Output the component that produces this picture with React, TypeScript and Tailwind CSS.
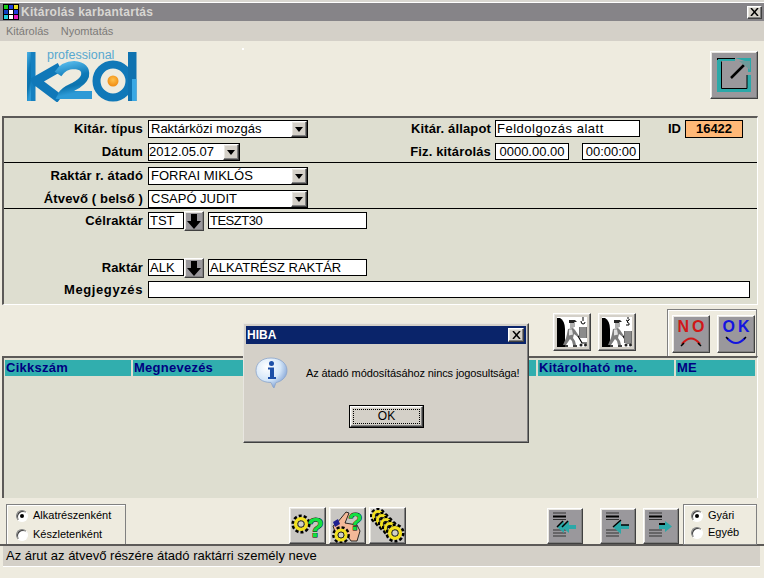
import React from "react";

const sans = "font-['Liberation_Sans',Arial,sans-serif]";
const raised = "border border-t-white border-l-white border-r-[#404040] border-b-[#404040] shadow-[inset_-1px_-1px_0_#808080,inset_1px_1px_0_#e8e6e0]";

function Label({ w, children }: { w: string; children: React.ReactNode }) {
  return <div className={`${w} shrink-0 pr-[5px] text-right text-[13px] font-bold leading-[17px] tracking-[0.15px] text-black`}>{children}</div>;
}

function Box({ w, children, center }: { w: string; children?: React.ReactNode; center?: boolean }) {
  return (
    <div className={`${w} h-[17px] shrink-0 border border-black bg-white px-[1px] text-[13px] leading-[15px] text-black whitespace-nowrap overflow-hidden ${center ? "text-center" : ""}`}>
      {children}
    </div>
  );
}

function Combo({ w, children }: { w: string; children: React.ReactNode }) {
  return (
    <div className={`${w} h-[18px] shrink-0 flex border border-black bg-white text-[13px] leading-[15px] text-black`}>
      <div className="flex-1 pl-[2px] whitespace-nowrap overflow-hidden">{children}</div>
      <div className={`w-[16px] h-full bg-[#d4d0c8] flex items-center justify-center ${raised}`}>
        <svg width="8" height="5" viewBox="0 0 8 5"><path d="M0 0h8L4 5z" fill="#000" /></svg>
      </div>
    </div>
  );
}

function DownBtn() {
  return (
    <div className={`w-[20px] h-[20px] -mt-[1px] shrink-0 bg-[#9a989c] flex items-center justify-center ${raised}`}>
      <svg width="14" height="15" viewBox="0 0 14 15"><path d="M4 0h6v7h4l-7 8-7-8h4z" fill="#000" /></svg>
    </div>
  );
}

function Divider() {
  return <div className="h-[1px] bg-black" />;
}

function ManIcon({ loaded }: { loaded?: boolean }) {
  return (
    <svg width="30" height="30" viewBox="0 0 30 30">
      <rect width="30" height="30" fill="#fff" />
      <path d="M0 30V1h3q5 3 5 11v18z" fill="#000" />
      <path d="M13 5h5v5h-1l-1 1h-3z" fill="#b0b0b0" />
      <path d="M12 3h6l2 2-3 0v1h-5z" fill="#222" />
      <path d="M11 12l5-1 2 2 4 6-1 1-4-3-1 4 2 3 1 4h-3l-1-4-2-2-4 6H6l3-7 1-4z" fill="#7c7c7c" />
      <path d="M12 12.500h3l1 5-4 1z" fill="#e0e0e0" />
      <path d="M7 29h4M16 29h4" stroke="#000" strokeWidth="1.500" />
      <path d="M21 19l4 7h5" stroke="#000" strokeWidth="1.200" fill="none" />
      <circle cx="24" cy="28" r="1.500" fill="#222" />
      <circle cx="28.500" cy="28" r="1.500" fill="#222" />
      {loaded ? (
        <>
          <path d="M26 0v4m-2 0q0 3 2 3t2-2" stroke="#000" strokeWidth="1" fill="none" />
          <rect x="22" y="10" width="8" height="11" fill="#6e6e6e" />
          <path d="M24 10v11M26 10v11M28 10v11" stroke="#a8a8a8" strokeWidth="1" />
        </>
      ) : (
        <>
          <path d="M26 0v2m-2 1q2 2 3 0t-2 2q3 1 2 3h-3" stroke="#000" strokeWidth="1" fill="none" />
          <rect x="22" y="14" width="8" height="12" fill="#6e6e6e" />
          <path d="M24 14v12M26 14v12M28 14v12" stroke="#a8a8a8" strokeWidth="1" />
        </>
      )}
    </svg>
  );
}

function Gear({ x, y, r }: { x: number; y: number; r: number }) {
  return (
    <g>
      <circle cx={x} cy={y} r={r} fill="none" stroke="#000" strokeWidth={r * 0.95} strokeDasharray="2.4 1.6" />
      <circle cx={x} cy={y} r={r * 0.82} fill="none" stroke="#f2e020" strokeWidth={r * 0.55} />
      <circle cx={x} cy={y} r={r * 0.5} fill="#cfcfc8" stroke="#000" strokeWidth="0.8" />
    </g>
  );
}

function Question({ x, y, size }: { x: number; y: number; size: number }) {
  return (
    <text x={x} y={y} fontSize={size} fontWeight="900" fill="#10e040" stroke="#000" strokeWidth="0.9" paintOrder="stroke" fontFamily="'Liberation Sans',Arial,sans-serif">?</text>
  );
}

function ListArrow({ dir, dbl }: { dir: "l" | "r"; dbl?: boolean }) {
  return (
    <svg width="30" height="30" viewBox="0 0 30 30">
      <path d="M5 4h13M5 10.500h13" stroke="#333" strokeWidth="1" />
      <path d="M5 7.500h13" stroke="#000" strokeWidth="2" />
      <path d="M5 21h13M5 24h13M5 27h13" stroke="#333" strokeWidth="1" />
      {dir === "r" ? (
        <>
          <path d="M15 15h6v-3l7 5.500-7 5.500v-3h-6z" fill="#2ba8a8" />
          <path d="M15 15h6" stroke="#000" strokeWidth="2" />
        </>
      ) : dbl ? (
        <>
          <path d="M28 16h-9l-1 4h10z" fill="#2ba8a8" />
          <path d="M21 12l-7 6 7 6z" fill="#2ba8a8" />
          <path d="M16 12l-7 6 7 6z" fill="#2ba8a8" />
          <path d="M20 12l-6 6M15 12l-6 6" stroke="#000" strokeWidth="1.500" />
        </>
      ) : (
        <>
          <path d="M28 16h-9v4h9z" fill="#2ba8a8" />
          <path d="M20 11l-8 7 8 7z" fill="#2ba8a8" />
          <path d="M20 11l-8 7M20 16h8" stroke="#000" strokeWidth="1.500" />
        </>
      )}
    </svg>
  );
}

function Radio({ on, h, children }: { on?: boolean; h: string; children: React.ReactNode }) {
  return (
    <div className={`flex items-center ${h} text-[11px] text-black`}>
      <div className="w-[12px] h-[12px] shrink-0 rounded-full bg-white border border-t-[#808080] border-l-[#808080] border-r-white border-b-white flex items-center justify-center shadow-[inset_1px_1px_0_#404040]">
        {on && <div className="w-[4px] h-[4px] rounded-full bg-black" />}
      </div>
      <span className="ml-[5px]">{children}</span>
    </div>
  );
}

function Logo() {
  return (
    <svg width="112" height="53" viewBox="0 0 112 53">
      <defs>
        <linearGradient id="lg" x1="0" y1="0" x2="0.25" y2="1">
          <stop offset="0" stopColor="#4fb4e6" />
          <stop offset="0.45" stopColor="#0f7ab8" />
          <stop offset="0.75" stopColor="#0d74ae" />
          <stop offset="1" stopColor="#2d9ad6" />
        </linearGradient>
        <radialGradient id="dot" cx="0.5" cy="0.4" r="0.6">
          <stop offset="0" stopColor="#ffc04a" />
          <stop offset="1" stopColor="#f08a10" />
        </radialGradient>
      </defs>
      <rect x="1" y="3" width="8.500" height="49" fill="#1580c0" />
      <rect x="1" y="3" width="4" height="49" fill="url(#lg)" />
      <path d="M6 34L34 18M10 32L34 50" stroke="#1078b8" strokeWidth="9" fill="none" />
      <path d="M32 25q6-9 16-9 13 1 11 11-2 6-12 11-9 4-11 8h30" stroke="url(#lg)" strokeWidth="8" fill="none" />
      <circle cx="87" cy="32" r="16.500" fill="#eeebdf" stroke="#1078b8" strokeWidth="8" />
      <rect x="102" y="3" width="8.500" height="49" fill="#0f72b0" />
      <rect x="106" y="30" width="4.500" height="22" fill="#3aa8e4" />
      <circle cx="87" cy="32" r="5.500" fill="url(#dot)" />
      <text x="21" y="10" fontSize="12.500" fill="#58a8d0" fontFamily="'Liberation Sans',Arial,sans-serif">professional</text>
    </svg>
  );
}

function InfoIcon() {
  return (
    <svg width="33" height="32" viewBox="0 0 33 32" className="shrink-0">
      <defs>
        <radialGradient id="bub" cx="0.35" cy="0.3" r="0.8">
          <stop offset="0" stopColor="#ffffff" />
          <stop offset="0.55" stopColor="#d4e6f8" />
          <stop offset="1" stopColor="#6c90cc" />
        </radialGradient>
      </defs>
      <path d="M16 1c9 0 16 5 16 12.500S25 25 21 25.500l-2 5.500-1-1-2-4.500C7 25.500 1 21 1 13.500S7 1 16 1z" fill="url(#bub)" stroke="#8aa4cc" strokeWidth="0.8" />
      <circle cx="16.500" cy="6.500" r="2.500" fill="#1c4fa8" />
      <path d="M13 10.500h6v9.500h2v2h-8v-2h2v-7.500h-2z" fill="#1c4fa8" />
    </svg>
  );
}

export default function App() {
  return (
    <div className={`relative w-[764px] h-[578px] overflow-hidden bg-[#eeebdf] ${sans}`}>
      {/* title bar */}
      <div className="h-[3px] border-t-2 border-[#d8d6d0] bg-white" />
      <div className="flex items-center h-[18px] bg-[#868488] pl-[3px] pr-[2px]">
        <svg width="16" height="16" viewBox="0 0 16 16" className="shrink-0">
          <rect width="16" height="16" fill="#000" />
          <rect x="1" y="1" width="4" height="4" fill="#18d018" />
          <rect x="6" y="1" width="4" height="4" fill="#2040e0" />
          <rect x="11" y="1" width="4" height="4" fill="#e8e020" />
          <rect x="1" y="6" width="4" height="4" fill="#1040c0" />
          <rect x="6" y="6" width="4" height="4" fill="#fff" />
          <rect x="11" y="6" width="4" height="4" fill="#2040e0" />
          <rect x="1" y="11" width="4" height="4" fill="#20d0e0" />
          <rect x="6" y="11" width="4" height="4" fill="#fff" />
          <rect x="11" y="11" width="4" height="4" fill="#e820c0" />
        </svg>
        <div className="ml-[2px] text-[12px] font-bold tracking-[0.25px] text-[#d8d6d2]">Kitárolás karbantartás</div>
        <div className={`ml-auto w-[15px] h-[13px] bg-[#d4d0c8] flex items-center justify-center ${raised}`}>
          <svg width="9" height="8" viewBox="0 0 9 8"><path d="M1 0l7 8M8 0L1 8" stroke="#000" strokeWidth="1.500" fill="none" /></svg>
        </div>
      </div>
      {/* menu */}
      <div className="flex items-center h-[20px] bg-[#d4d0c8] pl-[6px] gap-[12px] text-[11px] text-[#7c7a78]">
        <span>Kitárolás</span>
        <span>Nyomtatás</span>
      </div>
      {/* logo strip */}
      <div className="flex h-[75px] pl-[26px] pr-[6px] pt-[8px]">
        <Logo />
        <div className={`ml-auto w-[48px] h-[48px] mt-[2px] bg-[#9a989c] flex items-center justify-center ${raised}`}>
          <svg width="34" height="34" viewBox="0 0 34 34">
            <path d="M0 0h18v3H4v27h26V17h4v17H0z" fill="#2ba8a8" />
            <path d="M18 0h16v14h-3V8l-2-1-1-4z" fill="#2ba8a8" />
            <path d="M0 .5h18M.5 0v2M4.500 3.500V30.500H30V17" stroke="#000" strokeWidth="1" fill="none" />
            <path d="M14 20L27 7" stroke="#000" strokeWidth="2.500" />
            <path d="M22 3h11v9z" fill="#6f9a9a" />
          </svg>
        </div>
      </div>
      {/* form panel */}
      <div className="ml-[2px] w-[756px] h-[189px] border-t-2 border-l-2 border-r border-b border-t-[#5c5a58] border-l-[#5c5a58] border-r-white border-b-white bg-[#deded0]">
        <div className="h-[44px] pt-[2px] flex flex-col gap-[6px]">
          <div className="flex h-[17px]">
            <Label w="w-[144px]">Kitár. típus</Label>
            <Combo w="w-[160px]">Raktárközi mozgás</Combo>
            <Label w="w-[187px] !pr-[4px]">Kitár. állapot</Label>
            <Box w="w-[145px]"><span className="tracking-[0.5px]">Feldolgozás alatt</span></Box>
            <div className="w-[45px] pr-[4px] text-right text-[13px] font-bold leading-[17px]">ID</div>
            <div className="w-[58px] h-[18px] border border-black bg-[#ffb877] text-center text-[13px] font-bold leading-[16px]">16422</div>
          </div>
          <div className="flex h-[17px]">
            <Label w="w-[144px]">Dátum</Label>
            <div className="w-[92px] h-[18px] shrink-0 flex border border-black bg-white text-[13px] leading-[15px]">
              <div className="flex-1 whitespace-nowrap">2012.05.07</div>
              <div className={`w-[16px] h-full bg-[#d4d0c8] flex items-center justify-center ${raised}`}>
                <svg width="8" height="5" viewBox="0 0 8 5"><path d="M0 0h8L4 5z" fill="#000" /></svg>
              </div>
            </div>
            <Label w="w-[255px] !pr-[4px]">Fiz. kitárolás</Label>
            <Box w="w-[74px]" center>0000.00.00</Box>
            <div className="w-[13px]" />
            <Box w="w-[58px]" center>00:00:00</Box>
          </div>
        </div>
        <Divider />
        <div className="h-[45px] pt-[4px] flex flex-col gap-[5px]">
          <div className="flex h-[18px]">
            <Label w="w-[144px]">Raktár r. átadó</Label>
            <Combo w="w-[160px]">FORRAI MIKLÓS</Combo>
          </div>
          <div className="flex h-[18px]">
            <Label w="w-[144px]">Átvevő ( belső )</Label>
            <Combo w="w-[160px]">CSAPÓ JUDIT</Combo>
          </div>
        </div>
        <Divider />
        <div className="pt-[3px]">
          <div className="flex h-[18px]">
            <Label w="w-[144px]">Célraktár</Label>
            <Box w="w-[36px]">TST</Box>
            <DownBtn />
            <div className="w-[4px]" />
            <Box w="w-[159px]"><span className="tracking-[-0.5px]">TESZT30</span></Box>
          </div>
          <div className="flex h-[18px] mt-[29px]">
            <Label w="w-[144px]">Raktár</Label>
            <Box w="w-[36px]">ALK</Box>
            <DownBtn />
            <div className="w-[4px]" />
            <Box w="w-[159px]">ALKATRÉSZ RAKTÁR</Box>
          </div>
          <div className="flex h-[18px] mt-[4px]">
            <Label w="w-[144px]"><span className="tracking-[0.6px]">Megjegyzés</span></Label>
            <Box w="w-[602px]" />
          </div>
        </div>
      </div>
      {/* toolbar */}
      <div className="flex items-start justify-end h-[51px] pr-[7px]">
        <div className={`mt-[8px] w-[38px] h-[38px] p-[3px] bg-[#d4d0c8] ${raised}`}><ManIcon loaded /></div>
        <div className={`mt-[8px] ml-[7px] w-[38px] h-[38px] p-[3px] bg-[#d4d0c8] ${raised}`}><ManIcon /></div>
        <div className="ml-[31px] mt-[4px] w-[90px] h-[47px] flex gap-[7px] pl-[4px] pt-[5px] border-t border-l border-r border-t-[#808080] border-l-[#808080] border-r-[#808080] bg-[#eeebdf] shadow-[inset_1px_1px_0_#fff]">
          <div className={`w-[38px] h-[38px] bg-[#9a989c] flex flex-col items-center pt-[3px] ${raised}`}>
            <div className="text-[16px] font-bold leading-[16px] tracking-[3px] pl-[3px] text-[#d01818]">NO</div>
            <svg width="22" height="11" viewBox="0 0 22 11" className="mt-[1px]"><path d="M2 8Q11-3 20 8" stroke="#d01818" strokeWidth="2" fill="none" /><path d="M1 10l3-3M21 10l-3-3" stroke="#000" strokeWidth="1.500" /></svg>
          </div>
          <div className={`w-[38px] h-[38px] bg-[#9a989c] flex flex-col items-center pt-[3px] ${raised}`}>
            <div className="text-[16px] font-bold leading-[16px] tracking-[3px] pl-[3px] text-[#1414e0]">OK</div>
            <svg width="22" height="11" viewBox="0 0 22 11" className="mt-[1px]"><path d="M2 2Q11 12 20 2" stroke="#1414e0" strokeWidth="2" fill="none" /><path d="M1 1l2 2M21 1l-2 2" stroke="#000" strokeWidth="1.500" /></svg>
          </div>
        </div>
      </div>
      {/* table panel */}
      <div className="ml-[2px] w-[756px] h-[142px] border-t-2 border-l-2 border-r border-t-[#5c5a58] border-l-[#5c5a58] border-r-white bg-[#deded0]">
        <div className="flex gap-[2px] h-[16px] mt-[2px] ml-[1px] text-[13px] font-bold leading-[16px] tracking-[0.25px] text-[#000080]">
          <div className="w-[126px] bg-[#31aeae] pl-[1px]">Cikkszám</div>
          <div className="w-[403px] bg-[#31aeae] pl-[1px]">Megnevezés</div>
          <div className="w-[136px] bg-[#31aeae] pl-[1px]">Kitárolható me.</div>
          <div className="w-[79px] bg-[#31aeae] pl-[1px]">ME</div>
        </div>
      </div>
      {/* bottom buttons */}
      <div className="flex h-[48px] pl-[6px] border-b-2 border-[#5c5a58]">
        <div className="mt-[6px] w-[120px] h-[40px] border-t border-l border-r border-[#808080] bg-[#eeebdf] pl-[9px] pt-[1px] shadow-[inset_1px_1px_0_#fff]">
          <Radio on h="h-[19px]">Alkatrészenként</Radio>
          <Radio h="h-[19px]">Készletenként</Radio>
        </div>
        <div className="flex items-start gap-[3px] ml-[163px] mt-[9px]">
          <div className={`w-[37px] h-[37px] bg-[#c8c6c2] ${raised}`}>
            <svg width="35" height="35" viewBox="0 0 35 35"><Gear x={11} y={16} r={6.500} /><Question x={17} y={29} size={28} /></svg>
          </div>
          <div className={`w-[37px] h-[37px] bg-[#c8c6c2] ${raised}`}>
            <svg width="35" height="35" viewBox="0 0 35 35">
              <path d="M3 18l4-3L16 4l3 1-4 10 12 2 3 6-3 10h-6l-6-9-9 3z" fill="#f4b898" stroke="#000" strokeWidth="0.8" />
              <path d="M3 14l5-3 2 5-5 3z" fill="#202090" />
              <Gear x={11} y={27} r={6} />
              <Question x={18} y={22} size={24} />
            </svg>
          </div>
          <div className={`w-[37px] h-[37px] bg-[#c8c6c2] ${raised}`}>
            <svg width="35" height="35" viewBox="0 0 35 35">
              <Gear x={8} y={8} r={5.500} /><Gear x={12} y={12} r={5.500} /><Gear x={16} y={16} r={5.500} /><Gear x={20} y={20} r={5.500} /><Gear x={25} y={25} r={6.500} />
            </svg>
          </div>
        </div>
        <div className="flex items-start ml-[141px] mt-[10px]">
          <div className={`w-[36px] h-[36px] bg-[#9a989c] ${raised}`}><ListArrow dir="l" dbl /></div>
          <div className={`ml-[17px] w-[36px] h-[36px] bg-[#9a989c] ${raised}`}><ListArrow dir="l" /></div>
          <div className={`ml-[7px] w-[36px] h-[36px] bg-[#9a989c] ${raised}`}><ListArrow dir="r" /></div>
        </div>
        <div className="ml-[4px] mt-[6px] w-[74px] h-[41px] border border-[#808080] bg-[#eeebdf] pl-[7px] pt-[2px] shadow-[inset_1px_1px_0_#fff]">
          <Radio on h="h-[17px]">Gyári</Radio>
          <Radio h="h-[17px]">Egyéb</Radio>
        </div>
      </div>
      {/* status bar */}
      <div className="ml-[3px] w-[757px] h-[21px] bg-[#d4d0c8] border-b border-white pl-[3px] text-[13px] leading-[20px] text-black">
        Az árut az átvevő részére átadó raktárri személy neve
      </div>

      {/* stray pixel in the logo strip */}
      <div className="absolute left-[242px] top-[48px] w-[2px] h-[2px] bg-white" />

      {/* message box */}
      <div className="absolute left-[243px] top-[323px] w-[286px] h-[120px] bg-[#d4d0c8] p-[2px] border border-t-[#e8e6e0] border-l-[#e8e6e0] border-r-[#404040] border-b-[#404040] shadow-[inset_-1px_-1px_0_#808080]">
        <div className="flex items-center h-[18px] bg-[#0a246a] pl-[1px] pr-[2px] text-[12px] font-bold text-white">
          HIBA
          <div className={`ml-auto w-[16px] h-[14px] bg-[#d4d0c8] flex items-center justify-center ${raised}`}>
            <svg width="9" height="8" viewBox="0 0 9 8"><path d="M1 0l7 8M8 0L1 8" stroke="#000" strokeWidth="1.500" fill="none" /></svg>
          </div>
        </div>
        <div className="flex items-start pl-[9px] pt-[13px]">
          <InfoIcon />
          <div className="ml-[18px] mt-[8px] text-[11px] tracking-[-0.1px] text-black whitespace-nowrap">Az átadó módosításához nincs jogosultsága!</div>
        </div>
        <div className="mt-[16px] ml-[103px] w-[75px] h-[23px] border border-black">
          <div className={`h-full w-full bg-[#d4d0c8] flex items-center justify-center ${raised}`}>
            <div className="w-[67px] h-[15px] border border-dotted border-black text-center text-[12px] leading-[13px] text-black">OK</div>
          </div>
        </div>
      </div>
    </div>
  );
}
